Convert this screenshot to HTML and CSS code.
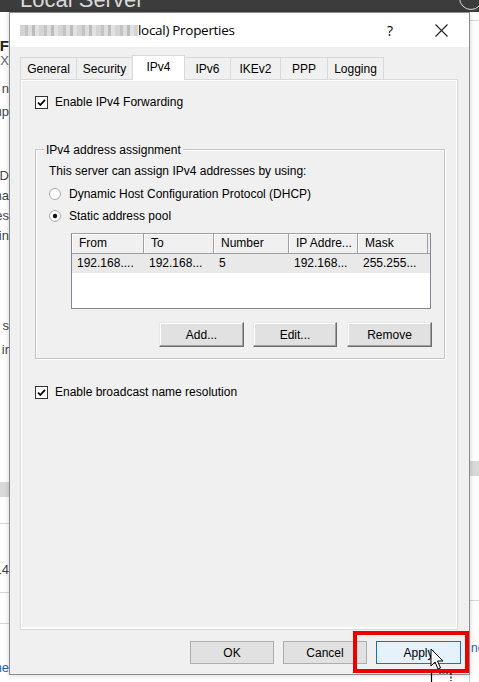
FILE: index.html
```html
<!DOCTYPE html>
<html>
<head>
<meta charset="utf-8">
<link rel="stylesheet" href="styles.css">
</head>
<body>
<div class="desk">
  <div class="topbar">
    <span class="topbar-title">Local Server</span>
    <span class="topbar-circle"></span>
  </div>
  <div class="bgwin">
    <div class="bg-left">
      <div class="frag frag-bold" style="margin-top:26px">PROPERTIES FOR DF</div>
      <div class="frag frag-grey">COMPUTER-TX</div>
      <div class="frag" style="margin-top:14px">Computer n</div>
      <div class="frag" style="margin-top:7px">Workgroup</div>
      <div class="frag" style="margin-top:48px">Windows D</div>
      <div class="frag" style="margin-top:4px">Remote Mana</div>
      <div class="frag" style="margin-top:4px">Remote Des</div>
      <div class="frag" style="margin-top:4px">NIC Teamin</div>
      <div class="frag" style="margin-top:74px">Operation s</div>
      <div class="frag" style="margin-top:8px">Processor ir</div>
      <div class="bg-band"></div>
      <div class="bg-line" style="margin-top:26px"></div>
      <div class="frag" style="margin-top:38px">14</div>
      <div class="bg-line" style="margin-top:14px"></div>
      <div class="bg-line" style="margin-top:30px"></div>
      <div class="frag frag-link" style="margin-top:36px">Name</div>
    </div>
    <div class="bg-right">
      <div class="bg-line" style="margin-top:8px"></div>
      <div class="bg-band bg-band-r"></div>
      <div class="bg-line" style="margin-top:124px"></div>
      <div class="frag-r frag-link" style="margin-top:39px">ne</div>
    </div>
  </div>
</div>

<div class="dialog">
  <div class="titlebar">
    <span class="blurred"></span>
    <span class="title-text">local) Properties</span>
    <span class="title-help">?</span>
    <svg class="title-close" width="13" height="13" viewBox="0 0 13 13"><path d="M0.5 0.5 L12.5 12.5 M12.5 0.5 L0.5 12.5" stroke="#222" stroke-width="1.1" fill="none"/></svg>
  </div>

  <div class="tabs">
    <div class="tab" style="width:57px">General</div>
    <div class="tab" style="width:57px">Security</div>
    <div class="tab tab-active" style="width:53px">IPv4</div>
    <div class="tab" style="width:47px">IPv6</div>
    <div class="tab" style="width:51px">IKEv2</div>
    <div class="tab" style="width:48px">PPP</div>
    <div class="tab" style="width:57px">Logging</div>
  </div>

  <div class="panel">
    <div class="check-row row-forward">
      <svg class="cb" width="13" height="13" viewBox="0 0 13 13"><rect x="0.5" y="0.5" width="12" height="12" fill="#fff" stroke="#333"/><path d="M3 6.5 L5.3 9 L10 3.8" stroke="#000" stroke-width="1.8" fill="none"/></svg>
      <span>Enable IPv4 Forwarding</span>
    </div>

    <div class="group">
      <div class="group-title">IPv4 address assignment</div>
      <div class="group-desc">This server can assign IPv4 addresses by using:</div>
      <div class="radio-row">
        <svg class="rb" width="12" height="12" viewBox="0 0 12 12"><circle cx="6" cy="6" r="5.5" fill="#fff" stroke="#a8a8a8"/></svg>
        <span>Dynamic Host Configuration Protocol (DHCP)</span>
      </div>
      <div class="radio-row">
        <svg class="rb" width="12" height="12" viewBox="0 0 12 12"><circle cx="6" cy="6" r="5.5" fill="#fff" stroke="#a8a8a8"/><circle cx="6" cy="6" r="2.2" fill="#111"/></svg>
        <span>Static address pool</span>
      </div>
      <div class="listview">
        <div class="lv-head">
          <div class="lv-col" style="width:72px">From</div>
          <div class="lv-col" style="width:70px">To</div>
          <div class="lv-col" style="width:75px">Number</div>
          <div class="lv-col" style="width:69px">IP Addre...</div>
          <div class="lv-col lv-col-last" style="width:70px">Mask</div>
        </div>
        <div class="lv-row">
          <div class="lv-cell" style="width:72px">192.168....</div>
          <div class="lv-cell" style="width:70px">192.168...</div>
          <div class="lv-cell" style="width:75px">5</div>
          <div class="lv-cell" style="width:69px">192.168...</div>
          <div class="lv-cell" style="width:70px">255.255...</div>
        </div>
      </div>
      <div class="group-buttons">
        <div class="btn btn-3d btn-add">Add...</div>
        <div class="btn btn-3d btn-edit">Edit...</div>
        <div class="btn btn-3d btn-remove">Remove</div>
      </div>
    </div>

    <div class="check-row row-broadcast">
      <svg class="cb" width="13" height="13" viewBox="0 0 13 13"><rect x="0.5" y="0.5" width="12" height="12" fill="#fff" stroke="#333"/><path d="M3 6.5 L5.3 9 L10 3.8" stroke="#000" stroke-width="1.8" fill="none"/></svg>
      <span>Enable broadcast name resolution</span>
    </div>
  </div>

  <div class="footer">
    <div class="btn btn-flat">OK</div>
    <div class="btn btn-flat">Cancel</div>
    <div class="btn btn-flat btn-focus">Apply</div>
  </div>
</div>

<div class="highlight"></div>

<svg class="cursor" width="26" height="36" viewBox="0 0 26 36">
  <path d="M1 1 L1 18 L5 14 L8 21 L10.5 20 L7.5 13 L13 13 Z" fill="#fff" stroke="#000" stroke-width="1"/>
  <path d="M1.5 24 L1.5 35" stroke="#000" stroke-width="1.2"/>
  <path d="M9 25 L21 25 M21 25 L21 33" stroke="#000" stroke-width="1.2" stroke-dasharray="2 1.5" fill="none"/>
</svg>
</body>
</html>
```
FILE: styles.css
```css
* { box-sizing: border-box; }
html, body {
  margin: 0;
  padding: 0;
  width: 479px;
  height: 682px;
  overflow: hidden;
  background: #fff;
  font-family: "Liberation Sans", Arial, sans-serif;
  font-size: 12px;
  color: #000;
}
.desk {
  width: 479px;
  height: 682px;
  display: flex;
  flex-direction: column;
}
.topbar {
  height: 12px;
  flex: none;
  background: #3c3c3c;
  position: relative;
  overflow: hidden;
}
.topbar-title {
  position: absolute;
  left: 20px;
  top: -13px;
  font-size: 22px;
  color: #d8d8d8;
  white-space: nowrap;
}
.topbar-circle {
  position: absolute;
  right: -4px;
  top: -14px;
  width: 24px;
  height: 24px;
  border: 1.5px solid #ddd;
  border-radius: 50%;
}
.bgwin {
  flex: 1;
  display: flex;
  justify-content: space-between;
}
.bg-left {
  width: 10px;
  display: flex;
  flex-direction: column;
  overflow: hidden;
  background: #fff;
}
.bg-right {
  width: 10px;
  display: flex;
  flex-direction: column;
  overflow: hidden;
  background: #fff;
  border-left: 1px solid #d0d0d0;
}
.frag {
  display: flex;
  justify-content: flex-end;
  white-space: nowrap;
  height: 16px;
  line-height: 16px;
  color: #444;
  font-size: 13px;
  padding-right: 1px;
}
.frag-r {
  white-space: nowrap;
  height: 16px;
  line-height: 16px;
  font-size: 12px;
  padding-left: 1px;
}
.frag-bold { font-weight: bold; color: #222; font-size: 15px; }
.frag-grey { color: #666; height: 13px; line-height: 13px; }
.frag-link { color: #1a62b8; }
.bg-band {
  height: 15px;
  margin-top: 124px;
  background: #d9d9d9;
}
.bg-band-r { margin-top: 440px; }
.bg-line {
  height: 1px;
  background: #d6d6d6;
}

/* dialog */
.dialog {
  position: absolute;
  left: 9px;
  top: 12px;
  width: 461px;
  height: 663px;
  background: #f0f0f0;
  border: 1px solid #8c8c8c;
  display: flex;
  flex-direction: column;
  box-shadow: 0 0 5px rgba(0,0,0,0.2);
}
.titlebar {
  height: 34px;
  flex: none;
  background: #fff;
  display: flex;
  align-items: center;
  padding-left: 10px;
}
.blurred {
  width: 118px;
  height: 11px;
  margin-top: 1px;
  background:
    repeating-linear-gradient(90deg, #d4d4d4 0 5px, #c3c3c3 5px 8px, #dedede 8px 12px, #bcbcbc 12px 15px, #e2e2e2 15px 19px);
}
.title-text {
  font-family: "Open Sans", sans-serif;
  font-size: 13.5px;
  color: #000;
  margin-left: 0;
  letter-spacing: -0.3px;
}
.title-help {
  margin-left: auto;
  font-family: "Open Sans", sans-serif;
  font-size: 14px;
  margin-right: 42px;
}
.title-close {
  margin-right: 21px;
}

.tabs {
  display: flex;
  align-items: flex-end;
  margin-top: 8px;
  margin-left: 10px;
  height: 24px;
  flex: none;
  position: relative;
  z-index: 2;
}
.tab {
  height: 22px;
  border: 1px solid #d9d9d9;
  border-bottom: none;
  margin-left: -1px;
  background: #f0f0f0;
  display: flex;
  align-items: center;
  justify-content: center;
  font-size: 12px;
  padding-top: 1px;
}
.tab:first-child { margin-left: 0; }
.tab-active {
  height: 25px;
  margin-bottom: -1px;
  background: #fff;
  padding-top: 0;
  padding-bottom: 3px;
  position: relative;
  z-index: 3;
}

.panel {
  margin-left: 10px;
  margin-right: 11px;
  height: 551px;
  flex: none;
  border: 1px solid #d9d9d9;
  background: #f0f0f0;
  box-shadow: inset 1px 1px 0 #fff, inset -1px -2px 0 #fff;
  display: flex;
  flex-direction: column;
  padding-left: 14px;
  padding-right: 12px;
}
.check-row {
  display: flex;
  align-items: center;
  height: 14px;
  white-space: nowrap;
}
.check-row .cb { flex: none; margin-right: 7px; }
.row-forward { margin-top: 15px; }
.row-broadcast { margin-top: 26px; }

.group {
  margin-top: 40px;
  border: 1px solid #c4c4c4;
  box-shadow: 1px 1px 0 #fff, inset 1px 1px 0 #fff;
  padding: 0 13px 11px 13px;
  display: flex;
  flex-direction: column;
  width: 410px;
}
.group-title {
  margin-top: -7px;
  margin-left: -5px;
  align-self: flex-start;
  background: #f0f0f0;
  padding: 0 2px;
  line-height: 14px;
  white-space: nowrap;
}
.group-desc {
  margin-top: 7px;
  line-height: 14px;
  white-space: nowrap;
}
.radio-row {
  display: flex;
  align-items: center;
  height: 14px;
  margin-top: 9px;
  white-space: nowrap;
}
.radio-row + .radio-row { margin-top: 8px; }
.radio-row .rb { flex: none; margin-right: 8px; }

.listview {
  margin-top: 10px;
  margin-left: 22px;
  height: 76px;
  border: 1px solid #828790;
  border-top-color: #a0a0a0;
  background: #fff;
  display: flex;
  flex-direction: column;
}
.lv-head {
  display: flex;
  height: 20px;
  flex: none;
  background: #f0f0f0;
  border-bottom: 1px solid #a0a0a0;
}
.lv-col {
  border-right: 1px solid #a0a0a0;
  box-shadow: inset 1px 1px 0 #fff;
  padding-left: 7px;
  line-height: 19px;
  white-space: nowrap;
  overflow: hidden;
}
.lv-row {
  display: flex;
  height: 19px;
  background: #e9e9e9;
}
.lv-cell {
  padding-left: 5px;
  line-height: 19px;
  white-space: nowrap;
  overflow: hidden;
}

.group-buttons {
  display: flex;
  justify-content: flex-end;
  margin-top: 13px;
  margin-right: -1px;
}
.btn {
  height: 25px;
  display: flex;
  align-items: center;
  justify-content: center;
  white-space: nowrap;
}
.btn-add { width: 85px; margin-right: 9px; }
.btn-edit { width: 84px; margin-right: 10px; }
.btn-remove { width: 85px; }
.btn-3d {
  background: #e1e1e1;
  border: 1px solid;
  border-color: #e8e8e8 #6c6c6c #6c6c6c #e8e8e8;
  box-shadow: inset -1px -1px 0 #a0a0a0, inset 1px 1px 0 #fff;
}

.footer {
  display: flex;
  justify-content: flex-end;
  gap: 9px;
  margin-top: 11px;
  padding-right: 8px;
}
.btn-flat {
  width: 84px;
  height: 23px;
  background: #e1e1e1;
  border: 1px solid #adadad;
}
.btn-focus {
  width: 85px;
  background: #e5f1fb;
  border: 1px solid #0078d7;
}

.highlight {
  position: absolute;
  left: 353px;
  top: 631px;
  width: 116px;
  height: 42px;
  border: 4px solid #ee0000;
}
.cursor {
  position: absolute;
  left: 430px;
  top: 648px;
}
```
